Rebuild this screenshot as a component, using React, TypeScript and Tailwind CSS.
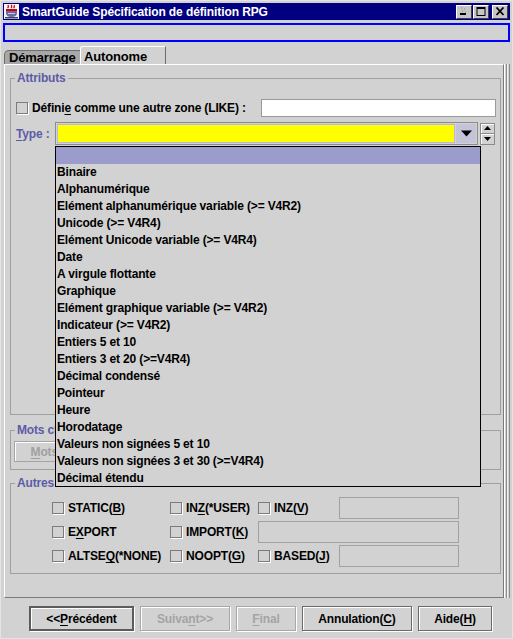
import React from 'react';

const types = [
  '',
  'Binaire',
  'Alphanumérique',
  'Elément alphanumérique variable (>= V4R2)',
  'Unicode (>= V4R4)',
  'Elément Unicode variable (>= V4R4)',
  'Date',
  'A virgule flottante',
  'Graphique',
  'Elément graphique variable (>= V4R2)',
  'Indicateur (>= V4R2)',
  'Entiers 5 et 10',
  'Entiers 3 et 20 (>=V4R4)',
  'Décimal condensé',
  'Pointeur',
  'Heure',
  'Horodatage',
  'Valeurs non signées 5 et 10',
  'Valeurs non signées 3 et 30 (>=V4R4)',
  'Décimal étendu',
];

function U({ children }: { children: React.ReactNode }) {
  return <span className="underline underline-offset-2 decoration-1">{children}</span>;
}

function Check() {
  return <span className="block w-[12px] h-[12px] shrink-0 border border-[#7c7c7c] shadow-[1px_1px_0_#fff]" />;
}

function TitleBtn({ children }: { children: React.ReactNode }) {
  return (
    <div className="w-[16px] h-[14px] bg-[#c6c6c6] border border-t-white border-l-white border-b-[#404040] border-r-[#404040] flex items-center justify-center">
      {children}
    </div>
  );
}

function Field({ className = '' }: { className?: string }) {
  return <div className={'h-[22px] border border-[#a2a2a2] ' + className} />;
}

function Opt({ children }: { children: React.ReactNode }) {
  return (
    <div className="flex items-center gap-[4px] whitespace-nowrap">
      <Check />
      <span>{children}</span>
    </div>
  );
}

export default function App() {
  return (
    <div className="w-[513px] h-[639px] bg-[#d2d2d2] border border-[#e4e4e4] p-[2px] flex flex-col overflow-hidden font-['Liberation_Sans',Arial,sans-serif] text-[12px] font-bold text-black leading-[14px] tracking-[-0.15px]">
      {/* title bar */}
      <div className="h-[17px] bg-[#000080] flex items-center shrink-0">
        <svg width="15" height="15" viewBox="0 0 15 15" className="ml-[1px]">
          <rect x="0" y="0" width="15" height="15" fill="#f4f4ff" />
          <path d="M4 1 q1 2 -0.5 3 M7 1 q1.5 1.5 0 3 M10 1 q1 2 -0.5 3" stroke="#d00000" strokeWidth="1.2" fill="none" />
          <rect x="2" y="5" width="11" height="2" fill="#d00000" />
          <path d="M2 7 h11 v2 q0 4 -5.5 4 q-5.5 0 -5.5 -4 z" fill="#6c6c9c" />
          <path d="M4 9 h7 v1 h-7 z" fill="#c8c8ee" />
          <rect x="1" y="13" width="13" height="1.5" fill="#404060" />
        </svg>
        <span className="ml-[3px] text-white text-[12px] tracking-[-0.1px]">SmartGuide Spécification de définition RPG</span>
        <div className="ml-auto mr-[2px] flex gap-[1px]">
          <TitleBtn>
            <svg width="10" height="9" viewBox="0 0 10 9">
              <path d="M2 1h1M5 2h1M3 4h1M6 5h1" stroke="#888" strokeWidth="1" />
              <rect x="1" y="6" width="6" height="2" fill="#000" />
            </svg>
          </TitleBtn>
          <TitleBtn>
            <svg width="10" height="9" viewBox="0 0 10 9">
              <rect x="1" y="0.5" width="8" height="8" fill="none" stroke="#000" strokeWidth="1" />
              <rect x="1" y="0" width="8" height="2" fill="#000" />
            </svg>
          </TitleBtn>
          <div className="w-[1px]" />
          <TitleBtn>
            <svg width="10" height="9" viewBox="0 0 10 9">
              <path d="M1.5 0.5 L8.5 8 M8.5 0.5 L1.5 8" stroke="#000" strokeWidth="1.8" />
            </svg>
          </TitleBtn>
        </div>
      </div>

      {/* blue status box */}
      <div className="mt-[3px] h-[19px] border-2 border-[#0000ff] shrink-0" />

      {/* tabs */}
      <div className="mt-[4px] ml-[1px] h-[18px] flex items-end shrink-0">
        <div className="w-[76px] h-[14px] bg-[#a8a8a8] border-l border-t border-[#6e6e6e] rounded-tl-[5px] pl-[4px] leading-[13px] text-[13px]">
          Démarrage
        </div>
        <div className="w-[86px] h-[18px] border-l border-t border-white border-r border-r-[#6e6e6e] rounded-tl-[3px] pl-[3px] pt-[2px] leading-[15px] text-[13px] font-bold">
          Autonome
        </div>
      </div>

      {/* content panel */}
      <div className="ml-[1px] w-[500px] h-[534px] shrink-0 border-t border-l border-white border-r border-r-[#7a7a7a] border-b border-b-[#7a7a7a] pl-[5px] pr-[2px] pt-[6px] flex flex-col shadow-[1px_0_0_#fff,2px_0_0_#d2d2d2,3px_0_0_#8a8a8a,4px_0_0_#f4f4f4,5px_0_0_#d2d2d2,6px_0_0_#8a8a8a]">
        {/* Attributs */}
        <fieldset className="h-[344px] border border-[#a0a0a0] shrink-0">
          <legend className="ml-[4px] px-[2px] text-[#5c5ca6] leading-[14px]">Attributs</legend>
          <div className="mt-[14px] h-[18px] pl-[5px] pr-[4px] flex items-center">
            <Check />
            <span className="ml-[4px]">Défini<U>e</U> comme une autre zone (LIKE) :</span>
            <div className="ml-auto w-[235px] h-[18px] bg-white border border-[#9a9a9a]" />
          </div>
          <div className="mt-[5px] h-[23px] pl-[5px] flex items-center">
            <span className="w-[39px] text-[#5c5ca6]"><U>T</U>ype :</span>
            <div className="relative w-[423px] h-[23px] border border-[#8c8c8c] flex">
              <div className="flex-1 m-[1px] border border-[#b8b8d8] bg-[#ffff00]" />
              <div className="w-[20px] my-[1px] mr-[1px] bg-[#c4c4d8] flex items-center justify-center">
                <svg width="11" height="7" viewBox="0 0 11 7">
                  <path d="M0 0.5 H11 L5.5 6.5 Z" fill="#000" />
                </svg>
              </div>
              {/* open dropdown list */}
              <div className="absolute left-[-1px] top-[23px] z-10 w-[426px] h-[341px] border border-black bg-[#d2d2d2]">
                {types.map((t, i) => (
                  <div
                    key={i}
                    className={'h-[17px] leading-[17px] pl-[1px] whitespace-nowrap ' + (i === 0 ? 'bg-[#9c9ccc]' : '')}
                  >
                    {t}
                  </div>
                ))}
              </div>
            </div>
            <div className="ml-[2px] w-[15px] h-[22px] flex flex-col">
              <div className="h-[11px] border border-[#8a8a8a] shadow-[inset_1px_1px_0_#fff] flex items-center justify-center">
                <svg width="7" height="4" viewBox="0 0 7 4"><path d="M3.5 0 L7 4 H0 Z" fill="#000" /></svg>
              </div>
              <div className="h-[11px] border border-t-0 border-[#8a8a8a] shadow-[inset_1px_1px_0_#fff] flex items-center justify-center">
                <svg width="7" height="4" viewBox="0 0 7 4"><path d="M0 0 H7 L3.5 4 Z" fill="#000" /></svg>
              </div>
            </div>
          </div>
        </fieldset>

        {/* Mots clés */}
        <fieldset className="mt-[8px] h-[47px] border border-[#a0a0a0] shrink-0">
          <legend className="ml-[4px] px-[2px] text-[#5c5ca6] leading-[14px]">Mots clés</legend>
          <div className="mt-[4px] ml-[3px] w-[96px] h-[21px] border border-[#a4a4a4] shadow-[inset_1px_1px_0_#fff] flex items-center justify-center text-[#a0a0a0]">
            <span><U>M</U>ots clés...</span>
          </div>
        </fieldset>

        {/* Autres */}
        <fieldset className="mt-[6px] h-[98px] border border-[#a0a0a0] shrink-0">
          <legend className="ml-[4px] px-[2px] text-[#5c5ca6] leading-[14px]">Autres</legend>
          <div className="mt-[7px] pl-[41px] grid grid-cols-[118px_88px_81px_120px] grid-rows-[22px_22px_22px] gap-y-[2px]">
            <Opt>STATIC(<U>B</U>)</Opt>
            <Opt>IN<U>Z</U>(*USER)</Opt>
            <Opt>INZ(<U>V</U>)</Opt>
            <Field />
            <Opt>E<U>X</U>PORT</Opt>
            <Opt>IMPORT(<U>K</U>)</Opt>
            <Field className="col-span-2" />
            <Opt>ALTSE<U>Q</U>(*NONE)</Opt>
            <Opt>NOOPT(<U>G</U>)</Opt>
            <Opt>BASED(<U>J</U>)</Opt>
            <Field />
          </div>
        </fieldset>
      </div>

      {/* bottom buttons */}
      <div className="mt-[8px] pl-[26px] flex gap-[6px] shrink-0">
        <div className="w-[105px] h-[25px] border-2 border-[#5c5c5c] shadow-[inset_1px_1px_0_#fff,1px_1px_0_#fff] flex items-center justify-center">
          <span>&lt;&lt;<U>P</U>récédent</span>
        </div>
        <div className="w-[90px] h-[25px] border border-[#a8a8a8] shadow-[inset_1px_1px_0_#fff,1px_1px_0_#fff] flex items-center justify-center text-[#a4a4a4]">
          <span>Suiva<U>n</U>t&gt;&gt;</span>
        </div>
        <div className="w-[60px] h-[25px] border border-[#a8a8a8] shadow-[inset_1px_1px_0_#fff,1px_1px_0_#fff] flex items-center justify-center text-[#a4a4a4]">
          <span><U>F</U>inal</span>
        </div>
        <div className="w-[110px] h-[25px] border border-[#6a6a6a] shadow-[inset_1px_1px_0_#fff,1px_1px_0_#fff] flex items-center justify-center">
          <span>Annulation(<U>C</U>)</span>
        </div>
        <div className="w-[74px] h-[25px] border border-[#6a6a6a] shadow-[inset_1px_1px_0_#fff,1px_1px_0_#fff] flex items-center justify-center">
          <span>Aide(<U>H</U>)</span>
        </div>
      </div>
    </div>
  );
}
